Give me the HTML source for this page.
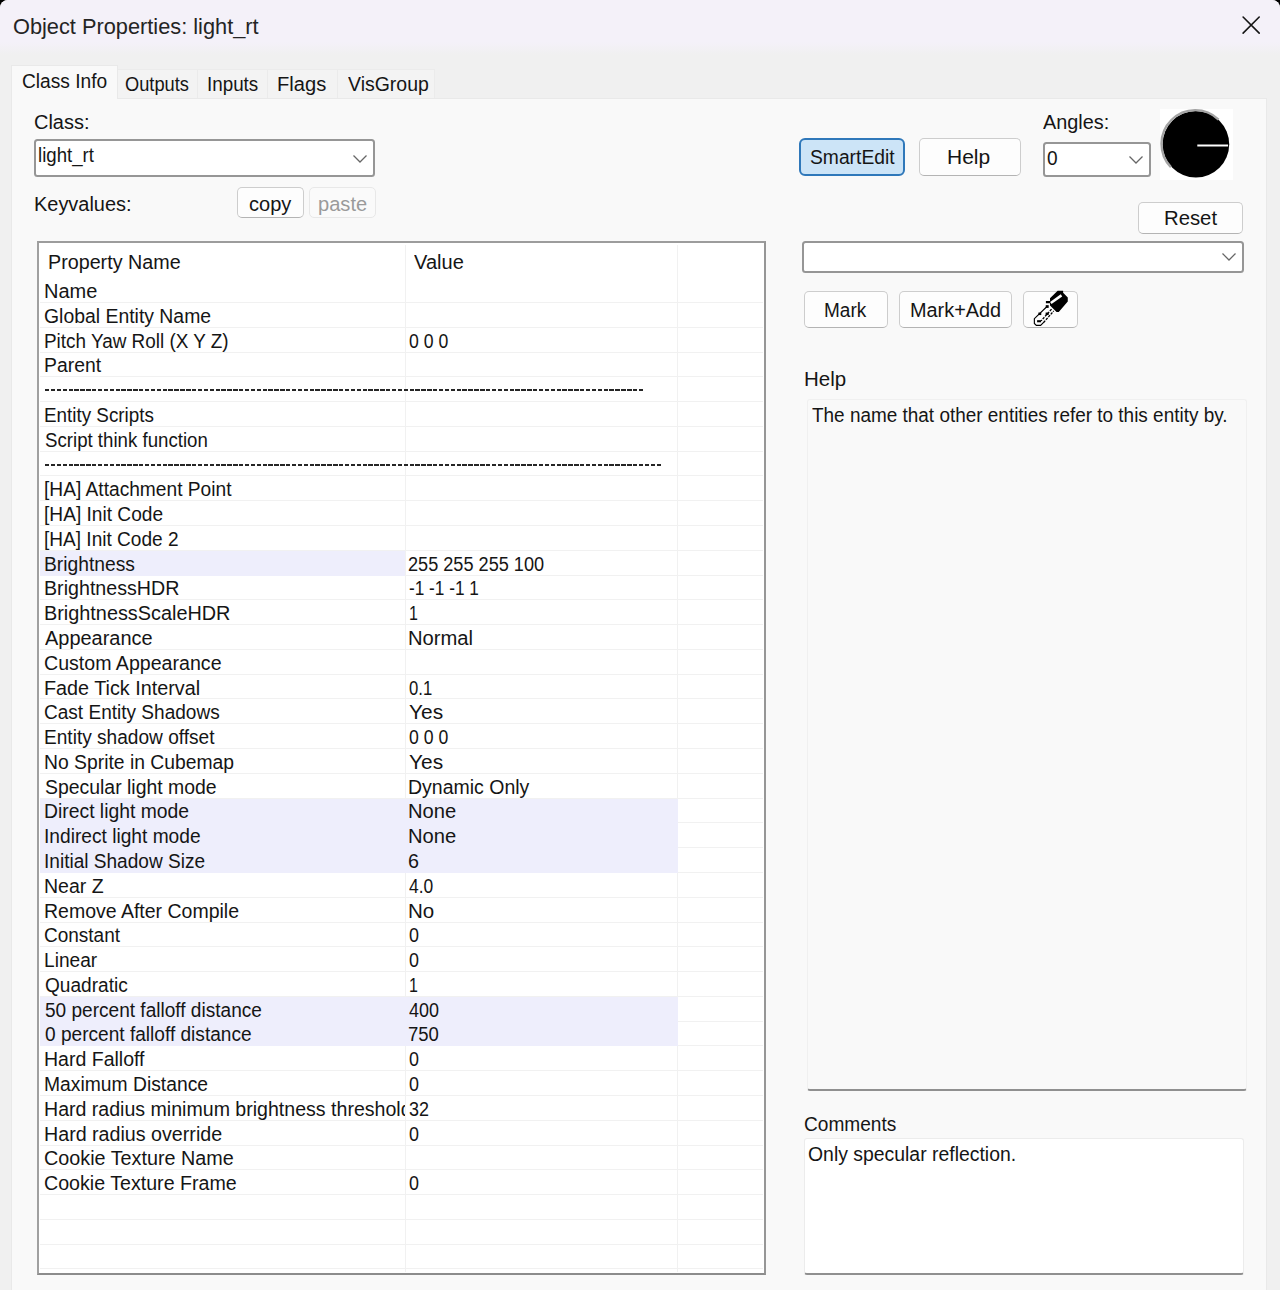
<!DOCTYPE html>
<html><head><meta charset="utf-8"><title>Object Properties: light_rt</title>
<style>
html,body{margin:0;padding:0;background:#000;}
body{width:1280px;height:1290px;overflow:hidden;position:relative;font-family:"Liberation Sans",sans-serif;}
#win{position:absolute;left:0;top:0;width:1280px;height:1290px;background:#f0f0f0;border-radius:8px 8px 0 0;overflow:hidden;}
#win div,#win span,#win svg{position:absolute;box-sizing:border-box;}
.t{white-space:pre;transform-origin:0 50%;font-family:"Liberation Sans",sans-serif;}
#titlebar{left:0;top:0;width:1280px;height:58px;background:linear-gradient(#f4f1f9 0,#f4f1f9 42px,#f0f0f0 55px);}
#page{left:11px;top:98px;width:1256px;height:1200px;background:#f9f9f9;border:1px solid #e9e9e9;}
.tab{background:#f3f3f3;border:1px solid #ebebeb;border-bottom:none;}
.tabsel{background:#f9f9f9;border:1px solid #e9e9e9;border-bottom:none;}
.btn{background:#fdfdfd;border:1px solid #cdcdcd;border-bottom-color:#b4b4b4;border-radius:5px;}
.btndis{background:#fafafa;border:1px solid #e8e8e8;border-radius:5px;}
.btndef{background:#cce4f7;border:2px solid #2f78ba;border-radius:6px;}
.combo{background:#fff;border:2px solid #969696;border-radius:3.5px;}
.list{background:#fff;border:2px solid;border-color:#9c9c9c #969696 #8c8c8c #a0a0a0;}
</style></head><body>
<div id="win">
<div id="titlebar"></div>
<svg style="left:1236px;top:10px" width="30" height="30" viewBox="0 0 30 30"><path d="M7.1 7 L23.2 23.1 M23.2 7 L7.1 23.1" stroke="#151515" stroke-width="1.6" fill="none" stroke-linecap="round"/></svg>
<!-- tabs -->
<div class="tab" style="left:117px;top:69px;width:81px;height:30px"></div>
<div class="tab" style="left:197px;top:69px;width:71px;height:30px"></div>
<div class="tab" style="left:267px;top:69px;width:71px;height:30px"></div>
<div class="tab" style="left:337px;top:69px;width:98px;height:30px"></div>
<div id="page"></div>
<div class="tabsel" style="left:11px;top:65px;width:107px;height:34px"></div>
<!-- class combo -->
<div class="combo" style="left:34px;top:139px;width:341px;height:38px"></div>
<svg style="left:351.8px;top:152.6px" width="16" height="12" viewBox="0 0 16 12"><path d="M1.5 2.5 L8 9 L14.5 2.5" stroke="#666" stroke-width="1.25" fill="none"/></svg>
<div class="btn" style="left:237px;top:187.4px;width:66.5px;height:31px"></div>
<div class="btndis" style="left:309px;top:187.4px;width:66.5px;height:31px"></div>
<!-- right top -->
<div class="btndef" style="left:799px;top:137.5px;width:105.5px;height:38px"></div>
<div class="btn" style="left:919px;top:137.5px;width:102px;height:38px"></div>
<div class="combo" style="left:1042.5px;top:142px;width:108px;height:35px"></div>
<svg style="left:1127.5px;top:154px" width="16" height="12" viewBox="0 0 16 12"><path d="M1.5 2.5 L8 9 L14.5 2.5" stroke="#666" stroke-width="1.25" fill="none"/></svg>
<div style="left:1159.5px;top:109px;width:73px;height:71px;background:#fff"></div>
<svg style="left:1158px;top:108px" width="76" height="74" viewBox="0 0 76 74"><circle cx="37.9" cy="36.2" r="33.3" fill="#000"/><path d="M12.9 59.2 A33.7 33.7 0 0 1 60.6 11.6" stroke="#a4a4a4" stroke-width="2.4" fill="none"/><path d="M39.3 37.5 H70.1" stroke="#fff" stroke-width="2"/></svg>
<div class="btn" style="left:1138px;top:202px;width:104.5px;height:31.5px"></div>
<div class="combo" style="left:802px;top:241px;width:442px;height:32px"></div>
<svg style="left:1221px;top:251px" width="16" height="12" viewBox="0 0 16 12"><path d="M1.5 2.5 L8 9 L14.5 2.5" stroke="#666" stroke-width="1.25" fill="none"/></svg>
<div class="btn" style="left:804px;top:291px;width:84px;height:37px"></div>
<div class="btn" style="left:899px;top:291px;width:112.5px;height:37px"></div>
<div class="btn" style="left:1023px;top:291px;width:54.5px;height:37px"></div>
<!-- eyedropper -->
<svg style="left:1015px;top:283px" width="70" height="50" viewBox="0 0 1280 914">
<path d="M590 425 L354 652 V740 L390 774 H468 L528 716" fill="none" stroke="#000" stroke-width="21"/>
<path d="M668 478 L478 692" fill="none" stroke="#000" stroke-width="24" stroke-dasharray="46 20"/>
<path d="M708 512 L522 722" fill="none" stroke="#000" stroke-width="24" stroke-dasharray="46 20" stroke-dashoffset="30"/>
<path d="M780 140 H880 V180 L965 265 V340 L800 530 H760 L640 410 V368 H565 V328 H640 V280 Z" fill="#000"/>
<path d="M655 366 L850 226" stroke="#fff" stroke-width="46" fill="none"/>
<rect x="562" y="405" width="54" height="50" fill="#000"/>
<rect x="428" y="540" width="52" height="46" fill="#000"/>
<rect x="560" y="540" width="56" height="46" fill="#000"/>
<rect x="404" y="680" width="72" height="38" fill="#000"/>
</svg>
<!-- help box -->
<div style="left:807px;top:399px;width:439.5px;height:692px;background:#f9f9f9;border:1px solid #f0f0f0;border-bottom:2px solid #909090;border-radius:3px"></div>
<!-- comments box -->
<div style="left:804px;top:1138px;width:440px;height:136.5px;background:#fff;border:1px solid #ececec;border-bottom:2px solid #909090;border-radius:3px"></div>
<!-- list -->
<div class="list" style="left:37px;top:241px;width:729px;height:1034px"></div>
<div class="" style="left:405px;top:245px;width:1.00px;height:1027.00px;background:#f1f1f1"></div>
<div class="" style="left:677px;top:245px;width:1.00px;height:1027.00px;background:#f1f1f1"></div>
<div class="" style="left:40px;top:302px;width:723.00px;height:1.00px;background:#f1f1f1"></div>
<div class="" style="left:40px;top:327px;width:723.00px;height:1.00px;background:#f1f1f1"></div>
<div class="" style="left:40px;top:352px;width:723.00px;height:1.00px;background:#f1f1f1"></div>
<div class="" style="left:40px;top:376px;width:723.00px;height:1.00px;background:#f1f1f1"></div>
<div class="" style="left:40px;top:401px;width:723.00px;height:1.00px;background:#f1f1f1"></div>
<div class="" style="left:40px;top:426px;width:723.00px;height:1.00px;background:#f1f1f1"></div>
<div class="" style="left:40px;top:451px;width:723.00px;height:1.00px;background:#f1f1f1"></div>
<div class="" style="left:40px;top:475px;width:723.00px;height:1.00px;background:#f1f1f1"></div>
<div class="" style="left:40px;top:500px;width:723.00px;height:1.00px;background:#f1f1f1"></div>
<div class="" style="left:40px;top:525px;width:723.00px;height:1.00px;background:#f1f1f1"></div>
<div class="" style="left:40px;top:550px;width:723.00px;height:1.00px;background:#f1f1f1"></div>
<div class="" style="left:40px;top:575px;width:723.00px;height:1.00px;background:#f1f1f1"></div>
<div class="" style="left:40px;top:599px;width:723.00px;height:1.00px;background:#f1f1f1"></div>
<div class="" style="left:40px;top:624px;width:723.00px;height:1.00px;background:#f1f1f1"></div>
<div class="" style="left:40px;top:649px;width:723.00px;height:1.00px;background:#f1f1f1"></div>
<div class="" style="left:40px;top:674px;width:723.00px;height:1.00px;background:#f1f1f1"></div>
<div class="" style="left:40px;top:698px;width:723.00px;height:1.00px;background:#f1f1f1"></div>
<div class="" style="left:40px;top:723px;width:723.00px;height:1.00px;background:#f1f1f1"></div>
<div class="" style="left:40px;top:748px;width:723.00px;height:1.00px;background:#f1f1f1"></div>
<div class="" style="left:40px;top:773px;width:723.00px;height:1.00px;background:#f1f1f1"></div>
<div class="" style="left:40px;top:798px;width:723.00px;height:1.00px;background:#f1f1f1"></div>
<div class="" style="left:40px;top:822px;width:723.00px;height:1.00px;background:#f1f1f1"></div>
<div class="" style="left:40px;top:847px;width:723.00px;height:1.00px;background:#f1f1f1"></div>
<div class="" style="left:40px;top:872px;width:723.00px;height:1.00px;background:#f1f1f1"></div>
<div class="" style="left:40px;top:897px;width:723.00px;height:1.00px;background:#f1f1f1"></div>
<div class="" style="left:40px;top:922px;width:723.00px;height:1.00px;background:#f1f1f1"></div>
<div class="" style="left:40px;top:946px;width:723.00px;height:1.00px;background:#f1f1f1"></div>
<div class="" style="left:40px;top:971px;width:723.00px;height:1.00px;background:#f1f1f1"></div>
<div class="" style="left:40px;top:996px;width:723.00px;height:1.00px;background:#f1f1f1"></div>
<div class="" style="left:40px;top:1021px;width:723.00px;height:1.00px;background:#f1f1f1"></div>
<div class="" style="left:40px;top:1045px;width:723.00px;height:1.00px;background:#f1f1f1"></div>
<div class="" style="left:40px;top:1070px;width:723.00px;height:1.00px;background:#f1f1f1"></div>
<div class="" style="left:40px;top:1095px;width:723.00px;height:1.00px;background:#f1f1f1"></div>
<div class="" style="left:40px;top:1120px;width:723.00px;height:1.00px;background:#f1f1f1"></div>
<div class="" style="left:40px;top:1145px;width:723.00px;height:1.00px;background:#f1f1f1"></div>
<div class="" style="left:40px;top:1169px;width:723.00px;height:1.00px;background:#f1f1f1"></div>
<div class="" style="left:40px;top:1194px;width:723.00px;height:1.00px;background:#f1f1f1"></div>
<div class="" style="left:40px;top:1219px;width:723.00px;height:1.00px;background:#f1f1f1"></div>
<div class="" style="left:40px;top:1244px;width:723.00px;height:1.00px;background:#f1f1f1"></div>
<div class="" style="left:40px;top:1268px;width:723.00px;height:1.00px;background:#f1f1f1"></div>
<div class="" style="left:40px;top:551px;width:365.00px;height:25.00px;background:#eeeefc"></div>
<div class="" style="left:40px;top:799px;width:638.00px;height:74.00px;background:#eeeefc"></div>
<div class="" style="left:40px;top:997px;width:638.00px;height:49.00px;background:#eeeefc"></div>
<div class="" style="left:45px;top:389.4px;width:599.80px;height:2.00px;background:repeating-linear-gradient(90deg,#262626 0,#262626 4.4px,#fff 4.4px,#fff 5.88px)"></div>
<div class="" style="left:45px;top:463.8px;width:617.00px;height:2.00px;background:repeating-linear-gradient(90deg,#262626 0,#262626 4.4px,#fff 4.4px,#fff 5.88px)"></div>
<span class="t" style="left:13.31px;top:11.98px;font-size:22px;line-height:29px;transform:scaleX(0.9894);color:#242424">Object Properties: light_rt</span>
<span class="t" style="left:21.54px;top:68.17px;font-size:20px;line-height:26px;transform:scaleX(0.9578);color:#151515">Class Info</span>
<span class="t" style="left:125.30px;top:71.07px;font-size:20px;line-height:26px;transform:scaleX(0.9123);color:#151515">Outputs</span>
<span class="t" style="left:206.76px;top:71.07px;font-size:20px;line-height:26px;transform:scaleX(0.9405);color:#151515">Inputs</span>
<span class="t" style="left:277.19px;top:71.07px;font-size:20px;line-height:26px;transform:scaleX(1.0061);color:#151515">Flags</span>
<span class="t" style="left:348.00px;top:71.07px;font-size:20px;line-height:26px;transform:scaleX(0.9736);color:#151515">VisGroup</span>
<span class="t" style="left:33.70px;top:108.57px;font-size:20px;line-height:26px;transform:scaleX(0.9979);color:#151515">Class:</span>
<span class="t" style="left:38.07px;top:142.17px;font-size:20px;line-height:26px;transform:scaleX(0.9315);color:#151515">light_rt</span>
<span class="t" style="left:34.20px;top:190.57px;font-size:20px;line-height:26px;transform:scaleX(0.9971);color:#151515">Keyvalues:</span>
<span class="t" style="left:248.50px;top:189.90px;font-size:20.5px;line-height:27px;transform:scaleX(0.9761);color:#151515">copy</span>
<span class="t" style="left:317.82px;top:189.90px;font-size:20.5px;line-height:27px;transform:scaleX(0.9806);color:#9a9a9a">paste</span>
<span class="t" style="left:810.00px;top:143.57px;font-size:20px;line-height:26px;transform:scaleX(0.9632);color:#151515">SmartEdit</span>
<span class="t" style="left:946.95px;top:143.57px;font-size:20px;line-height:26px;transform:scaleX(1.0497);color:#151515">Help</span>
<span class="t" style="left:1042.80px;top:109.07px;font-size:20px;line-height:26px;transform:scaleX(0.9931);color:#151515">Angles:</span>
<span class="t" style="left:1047.30px;top:145.27px;font-size:20px;line-height:26px;transform:scaleX(0.9545);color:#151515">0</span>
<span class="t" style="left:1163.68px;top:205.37px;font-size:20px;line-height:26px;transform:scaleX(1.0157);color:#151515">Reset</span>
<span class="t" style="left:824.05px;top:297.07px;font-size:20px;line-height:26px;transform:scaleX(0.9495);color:#151515">Mark</span>
<span class="t" style="left:910.01px;top:297.07px;font-size:20px;line-height:26px;transform:scaleX(0.9935);color:#151515">Mark+Add</span>
<span class="t" style="left:803.58px;top:365.97px;font-size:20px;line-height:26px;transform:scaleX(1.0247);color:#151515">Help</span>
<span class="t" style="left:812.00px;top:402.37px;font-size:20px;line-height:26px;transform:scaleX(0.9470);color:#151515">The name that other entities refer to this entity by.</span>
<span class="t" style="left:804.04px;top:1110.57px;font-size:20px;line-height:26px;transform:scaleX(0.9552);color:#151515">Comments</span>
<span class="t" style="left:807.80px;top:1140.57px;font-size:20px;line-height:26px;transform:scaleX(0.9700);color:#151515">Only specular reflection.</span>
<span class="t" style="left:48.01px;top:248.57px;font-size:20px;line-height:26px;transform:scaleX(0.9860);color:#151515">Property Name</span>
<span class="t" style="left:413.70px;top:248.57px;font-size:20px;line-height:26px;transform:scaleX(1.0031);color:#151515">Value</span>
<span class="t" style="left:44.00px;top:278.07px;font-size:20px;line-height:26px;transform:scaleX(1.0004);color:#151515">Name</span>
<span class="t" style="left:44.03px;top:302.85px;font-size:20px;line-height:26px;transform:scaleX(0.9698);color:#151515">Global Entity Name</span>
<span class="t" style="left:44.05px;top:327.63px;font-size:20px;line-height:26px;transform:scaleX(0.9452);color:#151515">Pitch Yaw Roll (X Y Z)</span>
<span class="t" style="left:44.03px;top:352.41px;font-size:20px;line-height:26px;transform:scaleX(0.9680);color:#151515">Parent</span>
<span class="t" style="left:44.06px;top:401.97px;font-size:20px;line-height:26px;transform:scaleX(0.9421);color:#151515">Entity Scripts</span>
<span class="t" style="left:45.00px;top:426.75px;font-size:20px;line-height:26px;transform:scaleX(0.9328);color:#151515">Script think function</span>
<span class="t" style="left:44.04px;top:476.31px;font-size:20px;line-height:26px;transform:scaleX(0.9582);color:#151515">[HA] Attachment Point</span>
<span class="t" style="left:44.04px;top:501.09px;font-size:20px;line-height:26px;transform:scaleX(0.9564);color:#151515">[HA] Init Code</span>
<span class="t" style="left:44.05px;top:525.87px;font-size:20px;line-height:26px;transform:scaleX(0.9532);color:#151515">[HA] Init Code 2</span>
<span class="t" style="left:44.04px;top:550.65px;font-size:20px;line-height:26px;transform:scaleX(0.9626);color:#151515">Brightness</span>
<span class="t" style="left:44.02px;top:575.43px;font-size:20px;line-height:26px;transform:scaleX(0.9826);color:#151515">BrightnessHDR</span>
<span class="t" style="left:44.01px;top:600.21px;font-size:20px;line-height:26px;transform:scaleX(0.9924);color:#151515">BrightnessScaleHDR</span>
<span class="t" style="left:45.00px;top:624.99px;font-size:20px;line-height:26px;transform:scaleX(0.9978);color:#151515">Appearance</span>
<span class="t" style="left:44.02px;top:649.77px;font-size:20px;line-height:26px;transform:scaleX(0.9796);color:#151515">Custom Appearance</span>
<span class="t" style="left:44.01px;top:674.55px;font-size:20px;line-height:26px;transform:scaleX(0.9888);color:#151515">Fade Tick Interval</span>
<span class="t" style="left:44.05px;top:699.33px;font-size:20px;line-height:26px;transform:scaleX(0.9522);color:#151515">Cast Entity Shadows</span>
<span class="t" style="left:44.05px;top:724.11px;font-size:20px;line-height:26px;transform:scaleX(0.9547);color:#151515">Entity shadow offset</span>
<span class="t" style="left:44.03px;top:748.89px;font-size:20px;line-height:26px;transform:scaleX(0.9660);color:#151515">No Sprite in Cubemap</span>
<span class="t" style="left:45.00px;top:773.67px;font-size:20px;line-height:26px;transform:scaleX(0.9709);color:#151515">Specular light mode</span>
<span class="t" style="left:44.03px;top:798.45px;font-size:20px;line-height:26px;transform:scaleX(0.9669);color:#151515">Direct light mode</span>
<span class="t" style="left:44.04px;top:823.23px;font-size:20px;line-height:26px;transform:scaleX(0.9581);color:#151515">Indirect light mode</span>
<span class="t" style="left:44.05px;top:848.01px;font-size:20px;line-height:26px;transform:scaleX(0.9532);color:#151515">Initial Shadow Size</span>
<span class="t" style="left:44.02px;top:872.79px;font-size:20px;line-height:26px;transform:scaleX(0.9765);color:#151515">Near Z</span>
<span class="t" style="left:44.03px;top:897.57px;font-size:20px;line-height:26px;transform:scaleX(0.9747);color:#151515">Remove After Compile</span>
<span class="t" style="left:44.05px;top:922.35px;font-size:20px;line-height:26px;transform:scaleX(0.9498);color:#151515">Constant</span>
<span class="t" style="left:44.04px;top:947.13px;font-size:20px;line-height:26px;transform:scaleX(0.9557);color:#151515">Linear</span>
<span class="t" style="left:45.00px;top:971.91px;font-size:20px;line-height:26px;transform:scaleX(0.9543);color:#151515">Quadratic</span>
<span class="t" style="left:45.00px;top:996.69px;font-size:20px;line-height:26px;transform:scaleX(0.9530);color:#151515">50 percent falloff distance</span>
<span class="t" style="left:45.00px;top:1021.47px;font-size:20px;line-height:26px;transform:scaleX(0.9546);color:#151515">0 percent falloff distance</span>
<span class="t" style="left:44.02px;top:1046.25px;font-size:20px;line-height:26px;transform:scaleX(0.9761);color:#151515">Hard Falloff</span>
<span class="t" style="left:44.04px;top:1071.03px;font-size:20px;line-height:26px;transform:scaleX(0.9650);color:#151515">Maximum Distance</span>
<div style="left:0;top:1095.81px;width:405px;height:26px;overflow:hidden"><span class="t" style="left:44.02px;top:0px;font-size:20px;line-height:26px;transform:scaleX(0.9783);color:#151515">Hard radius minimum brightness threshold</span></div>
<span class="t" style="left:44.02px;top:1120.59px;font-size:20px;line-height:26px;transform:scaleX(0.9830);color:#151515">Hard radius override</span>
<span class="t" style="left:44.01px;top:1145.37px;font-size:20px;line-height:26px;transform:scaleX(0.9886);color:#151515">Cookie Texture Name</span>
<span class="t" style="left:44.02px;top:1170.15px;font-size:20px;line-height:26px;transform:scaleX(0.9815);color:#151515">Cookie Texture Frame</span>
<span class="t" style="left:408.90px;top:327.63px;font-size:20px;line-height:26px;transform:scaleX(0.8814);color:#151515">0 0 0</span>
<span class="t" style="left:407.99px;top:550.65px;font-size:20px;line-height:26px;transform:scaleX(0.9066);color:#151515">255 255 255 100</span>
<span class="t" style="left:408.90px;top:575.43px;font-size:20px;line-height:26px;transform:scaleX(0.8621);color:#151515">-1 -1 -1 1</span>
<span class="t" style="left:408.70px;top:600.21px;font-size:20px;line-height:26px;transform:scaleX(0.8000);color:#151515">1</span>
<span class="t" style="left:407.89px;top:624.99px;font-size:20px;line-height:26px;transform:scaleX(1.0094);color:#151515">Normal</span>
<span class="t" style="left:408.90px;top:674.55px;font-size:20px;line-height:26px;transform:scaleX(0.8345);color:#151515">0.1</span>
<span class="t" style="left:408.90px;top:699.33px;font-size:20px;line-height:26px;transform:scaleX(1.0451);color:#151515">Yes</span>
<span class="t" style="left:408.90px;top:724.11px;font-size:20px;line-height:26px;transform:scaleX(0.8814);color:#151515">0 0 0</span>
<span class="t" style="left:408.90px;top:748.89px;font-size:20px;line-height:26px;transform:scaleX(1.0451);color:#151515">Yes</span>
<span class="t" style="left:407.93px;top:773.67px;font-size:20px;line-height:26px;transform:scaleX(0.9747);color:#151515">Dynamic Only</span>
<span class="t" style="left:407.89px;top:798.45px;font-size:20px;line-height:26px;transform:scaleX(1.0088);color:#151515">None</span>
<span class="t" style="left:407.89px;top:823.23px;font-size:20px;line-height:26px;transform:scaleX(1.0088);color:#151515">None</span>
<span class="t" style="left:407.91px;top:848.01px;font-size:20px;line-height:26px;transform:scaleX(0.9850);color:#151515">6</span>
<span class="t" style="left:408.90px;top:872.79px;font-size:20px;line-height:26px;transform:scaleX(0.8707);color:#151515">4.0</span>
<span class="t" style="left:407.87px;top:897.57px;font-size:20px;line-height:26px;transform:scaleX(1.0269);color:#151515">No</span>
<span class="t" style="left:408.90px;top:922.35px;font-size:20px;line-height:26px;transform:scaleX(0.8955);color:#151515">0</span>
<span class="t" style="left:408.90px;top:947.13px;font-size:20px;line-height:26px;transform:scaleX(0.8955);color:#151515">0</span>
<span class="t" style="left:408.70px;top:971.91px;font-size:20px;line-height:26px;transform:scaleX(0.8000);color:#151515">1</span>
<span class="t" style="left:408.90px;top:996.69px;font-size:20px;line-height:26px;transform:scaleX(0.8978);color:#151515">400</span>
<span class="t" style="left:407.97px;top:1021.47px;font-size:20px;line-height:26px;transform:scaleX(0.9257);color:#151515">750</span>
<span class="t" style="left:408.90px;top:1046.25px;font-size:20px;line-height:26px;transform:scaleX(0.8955);color:#151515">0</span>
<span class="t" style="left:408.90px;top:1071.03px;font-size:20px;line-height:26px;transform:scaleX(0.8955);color:#151515">0</span>
<span class="t" style="left:408.90px;top:1095.81px;font-size:20px;line-height:26px;transform:scaleX(0.8973);color:#151515">32</span>
<span class="t" style="left:408.90px;top:1120.59px;font-size:20px;line-height:26px;transform:scaleX(0.8955);color:#151515">0</span>
<span class="t" style="left:408.90px;top:1170.15px;font-size:20px;line-height:26px;transform:scaleX(0.8955);color:#151515">0</span>
</div>
</body></html>
